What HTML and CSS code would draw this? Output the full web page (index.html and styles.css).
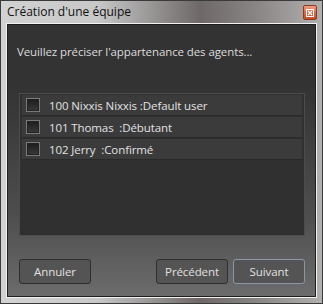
FILE: index.html
```html
<!DOCTYPE html>
<html lang="fr">
<head>
<meta charset="utf-8">
<link rel="stylesheet" href="styles.css">
</head>
<body>
<div class="window">
  <div class="titlebar">
    <span class="title">Création d'une équipe</span>
    <span class="close"><svg width="8" height="8" viewBox="0 0 8 8"><rect x="0.5" y="0.5" width="7" height="7" fill="none" stroke="#fff" stroke-width="1"/><path d="M2 2 L6 6 M6 2 L2 6" stroke="#fff" stroke-width="1.3"/></svg></span>
  </div>
  <div class="panel">
    <p class="prompt">Veuillez préciser l'appartenance des agents...</p>
    <div class="list">
      <div class="row"><span class="check"></span><span class="label">100 Nixxis Nixxis :Default user</span></div>
      <div class="row"><span class="check"></span><span class="label">101 Thomas&nbsp; :Débutant</span></div>
      <div class="row"><span class="check"></span><span class="label">102 Jerry&nbsp; :Confirmé</span></div>
    </div>
    <div class="buttons">
      <button class="btn">Annuler</button>
      <span class="spacer"></span>
      <button class="btn">Précédent</button>
      <button class="btn default">Suivant</button>
    </div>
  </div>
</div>
</body>
</html>
```
FILE: styles.css
```css
html, body { margin: 0; padding: 0; }
body { width: 323px; height: 304px; background: #fff; font-family: "Open Sans", "Noto Sans", sans-serif; }
.window {
  box-sizing: border-box;
  width: 323px; height: 304px;
  border: 1px solid #3a3a3a;
  background: linear-gradient(to right, #d2d2d2 0%, #c8c8c8 30%, #6e6868 62%, #8a8686 80%, #b2afaf 100%);
  padding: 0 5px 5px 5px;
  display: flex; flex-direction: column;
}
.titlebar { height: 22px; display: flex; align-items: center; position: relative; }
.title { font-size: 12px; color: #111; margin-left: 1px; margin-top: -2px; }
.close {
  position: absolute; right: 0; top: 4px;
  width: 14px; height: 15px; box-sizing: border-box;
  border: 1px solid #8a3a22; border-radius: 2px;
  background: linear-gradient(to bottom, #f0a088 0%, #e06a48 45%, #c84a28 100%);
  display: flex; align-items: center; justify-content: center;
}
.panel {
  flex: 1;
  border: 1px solid #f2f2f2;
  box-shadow: inset 0 0 0 1px #1e1e1e;
  background: linear-gradient(to bottom, #333 0%, #333 22%, #4e4e4e 70%, #6c6c6c 100%);
  padding: 0 11px 0 12px;
  display: flex; flex-direction: column;
}
.prompt { margin: 20px 0 0 -2px; font-size: 11.5px; color: #dcdcdc; line-height: 16px; letter-spacing: -0.1px; }
.list {
  margin-top: 33px;
  height: 143px; box-sizing: border-box;
  border: 1px solid #4c4c4c;
  background: #303030;
  padding: 1px 2px 0 2px;
  display: flex; flex-direction: column; gap: 2px;
}
.row {
  height: 20px; background: #3b3b3b;
  display: flex; align-items: center;
  box-shadow: 0 1px 0 #2a2a2a;
}
.check {
  width: 14px; height: 14px; box-sizing: border-box; margin-left: 4px;
  border: 1px solid #7a7a7a;
  box-shadow: inset 0 0 0 1px #222;
  background: linear-gradient(to bottom, #1c1c1c, #3a3a3a);
}
.label { margin-left: 9px; font-size: 11.5px; color: #e2e2e2; letter-spacing: -0.1px; white-space: nowrap; }
.buttons { margin-top: 23px; display: flex; gap: 5px; }
.spacer { flex: 1; }
.btn {
  width: 72px; height: 25px; box-sizing: border-box;
  border: 1px solid #2e2e2e; border-radius: 3px;
  background: #545454;
  color: #e0e0e0; font-family: "Open Sans", "Noto Sans", sans-serif; font-size: 11.5px;
  padding: 0; letter-spacing: -0.1px;
}
.btn.default { border-color: #8898a8; }
```
